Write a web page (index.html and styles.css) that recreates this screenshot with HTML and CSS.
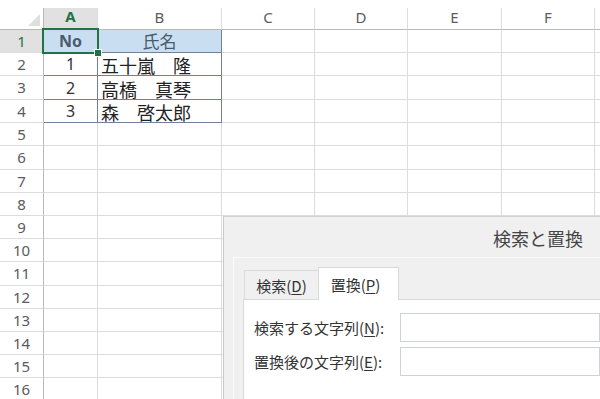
FILE: index.html
```
<!DOCTYPE html>
<html lang="ja">
<head>
<meta charset="utf-8">
<title>検索と置換</title>
<link rel="stylesheet" href="styles.css">
</head>
<body>
<div class="sheet">
  <div class="row head">
    <div class="corner"><span class="tri"></span></div>
    <div class="ch-sel">A</div><div>B</div><div>C</div><div>D</div><div>E</div><div>F</div><div></div>
  </div>
  <div class="row">
    <div class="rh rh-sel">1</div>
    <div class="t tb no">No<span class="sel"><span class="handle"></span></span></div>
    <div class="t tb">氏名</div>
    <div></div><div></div><div></div><div></div><div></div>
  </div>
  <div class="row">
    <div class="rh">2</div>
    <div class="t num">1</div>
    <div class="t name">五十嵐　隆</div>
    <div></div><div></div><div></div><div></div><div></div>
  </div>
  <div class="row tall">
    <div class="rh">3</div>
    <div class="t num">2</div>
    <div class="t name">高橋　真琴</div>
    <div></div><div></div><div></div><div></div><div></div>
  </div>
  <div class="row">
    <div class="rh">4</div>
    <div class="t num">3</div>
    <div class="t name">森　啓太郎</div>
    <div></div><div></div><div></div><div></div><div></div>
  </div>
  <div class="row"><div class="rh">5</div><div></div><div></div><div></div><div></div><div></div><div></div><div></div></div>
  <div class="row tall"><div class="rh">6</div><div></div><div></div><div></div><div></div><div></div><div></div><div></div></div>
  <div class="row"><div class="rh">7</div><div></div><div></div><div></div><div></div><div></div><div></div><div></div></div>
  <div class="row"><div class="rh">8</div><div></div><div></div><div></div><div></div><div></div><div></div><div></div></div>
  <div class="row"><div class="rh">9</div><div></div><div></div><div></div><div></div><div></div><div></div><div></div></div>
  <div class="row"><div class="rh">10</div><div></div><div></div><div></div><div></div><div></div><div></div><div></div></div>
  <div class="row tall"><div class="rh">11</div><div></div><div></div><div></div><div></div><div></div><div></div><div></div></div>
  <div class="row"><div class="rh">12</div><div></div><div></div><div></div><div></div><div></div><div></div><div></div></div>
  <div class="row"><div class="rh">13</div><div></div><div></div><div></div><div></div><div></div><div></div><div></div></div>
  <div class="row"><div class="rh">14</div><div></div><div></div><div></div><div></div><div></div><div></div><div></div></div>
  <div class="row"><div class="rh">15</div><div></div><div></div><div></div><div></div><div></div><div></div><div></div></div>
  <div class="row"><div class="rh">16</div><div></div><div></div><div></div><div></div><div></div><div></div><div></div></div>
</div>

<div class="dialog">
  <div class="dlg-title">検索と置換</div>
  <div class="dlg-panel">
    <div class="tabs">
      <div class="tab">検索(<u>D</u>)</div>
      <div class="tab active">置換(<u>P</u>)</div>
    </div>
    <div class="tab-body">
      <div class="field"><label>検索する文字列(<u>N</u>):</label><div class="input"></div></div>
      <div class="field"><label>置換後の文字列(<u>E</u>):</label><div class="input"></div></div>
    </div>
  </div>
</div>
</body>
</html>
```
FILE: styles.css
```
html, body {
  margin: 0;
  padding: 0;
}
body {
  width: 600px;
  height: 399px;
  overflow: hidden;
  background: #fff;
  position: relative;
  font-family: "Noto Sans", "Noto Sans CJK JP", sans-serif;
}
.sheet {
  padding-top: 8px;
}
.row {
  display: grid;
  grid-template-columns: 44px 54px 124px 93px 93px 94px 93px 1fr;
  height: 23px;
}
.row.tall { height: 24px; }
.row.head { height: 22px; }
.row > div {
  box-sizing: border-box;
  border-right: 1px solid #dcdcdc;
  border-bottom: 1px solid #dcdcdc;
  display: flex;
  align-items: center;
  justify-content: center;
  line-height: 1;
}
.row > div:last-child { border-right: none; }
.head > div {
  border-bottom-color: #b9b9b9;
  color: #5c5c5c;
  font-size: 15px;
  padding-bottom: 3px;
}
.head > .corner {
  align-items: flex-end;
  justify-content: flex-end;
  padding: 0 3px 3px 0;
  border-right-color: #b9b9b9;
}
.tri {
  width: 0;
  height: 0;
  border-left: 12px solid transparent;
  border-bottom: 12px solid #dfdfdf;
}
.head > .ch-sel {
  background: #e1e1e1;
  color: #217346;
  font-weight: bold;
  border-bottom: 2px solid #217346;
}
.row > .rh {
  border-right-color: #b9b9b9;
  color: #5a5a5a;
  font-size: 15px;
}
.row > .rh-sel {
  background: #e1e1e1;
  color: #217346;
}
.row > .t {
  border-right-color: #6e8399;
  border-bottom-color: #6e8399;
}
.row > .tb {
  background: #c9dff1;
  color: #4a5b6e;
  font-size: 17px;
}
.row > .no {
  position: relative;
  font-weight: bold;
  font-size: 16px;
}
.sel {
  position: absolute;
  left: -2px;
  top: -2px;
  right: -2px;
  bottom: -2px;
  border: 2px solid #217346;
}
.handle {
  position: absolute;
  right: -5px;
  bottom: -5px;
  width: 6px;
  height: 6px;
  background: #217346;
  border: 1px solid #fff;
}
.row > .num {
  font-size: 16px;
  color: #333;
}
.row > .name {
  justify-content: flex-start;
  padding: 2px 0 0 3px;
  font-family: "Noto Sans CJK JP", sans-serif;
  font-size: 18px;
  color: #222;
}

.dialog {
  position: absolute;
  left: 223px;
  top: 216px;
  right: 0;
  bottom: 0;
  background: #f0f0f0;
  border-left: 1px solid #c9c9c9;
  border-top: 1px solid #d2d2d2;
  font-family: "Noto Sans CJK JP", sans-serif;
  color: #333;
  display: flex;
  flex-direction: column;
}
.dlg-title {
  height: 40px;
  line-height: 42px;
  padding-left: 269px;
  font-size: 18px;
  color: #444;
}
.dlg-panel {
  flex: 1;
  margin-left: 9px;
  border-top: 1px solid #fbfbfb;
  border-left: 1px solid #fbfbfb;
  padding: 9px 0 0 9px;
  display: flex;
  flex-direction: column;
}
.tabs {
  display: flex;
  align-items: flex-end;
  height: 32px;
  padding-left: 1px;
}
.tab {
  box-sizing: border-box;
  width: 74px;
  height: 29px;
  border: 1px solid #d9d9d9;
  border-right: none;
  border-bottom: none;
  display: flex;
  align-items: center;
  justify-content: center;
  font-size: 15px;
  line-height: 1;
  color: #333;
}
.tab.active {
  width: 81px;
  height: 33px;
  background: #fff;
  border-right: 1px solid #d9d9d9;
  margin-bottom: -1px;
  padding: 1px 6px 0 0;
  position: relative;
}
.tab-body {
  flex: 1;
  background: #fff;
  border-top: 1px solid #d9d9d9;
  border-left: 1px solid #d9d9d9;
  padding: 13px 0 0 10px;
  display: flex;
  flex-direction: column;
  gap: 5px;
}
.field {
  display: flex;
  align-items: center;
}
.field label {
  width: 146px;
  font-size: 15px;
  color: #333;
}
.input {
  flex: 1;
  height: 29px;
  box-sizing: border-box;
  border: 1px solid #cfd3d8;
  background: #fff;
}
u {
  text-underline-offset: 2px;
}
```
